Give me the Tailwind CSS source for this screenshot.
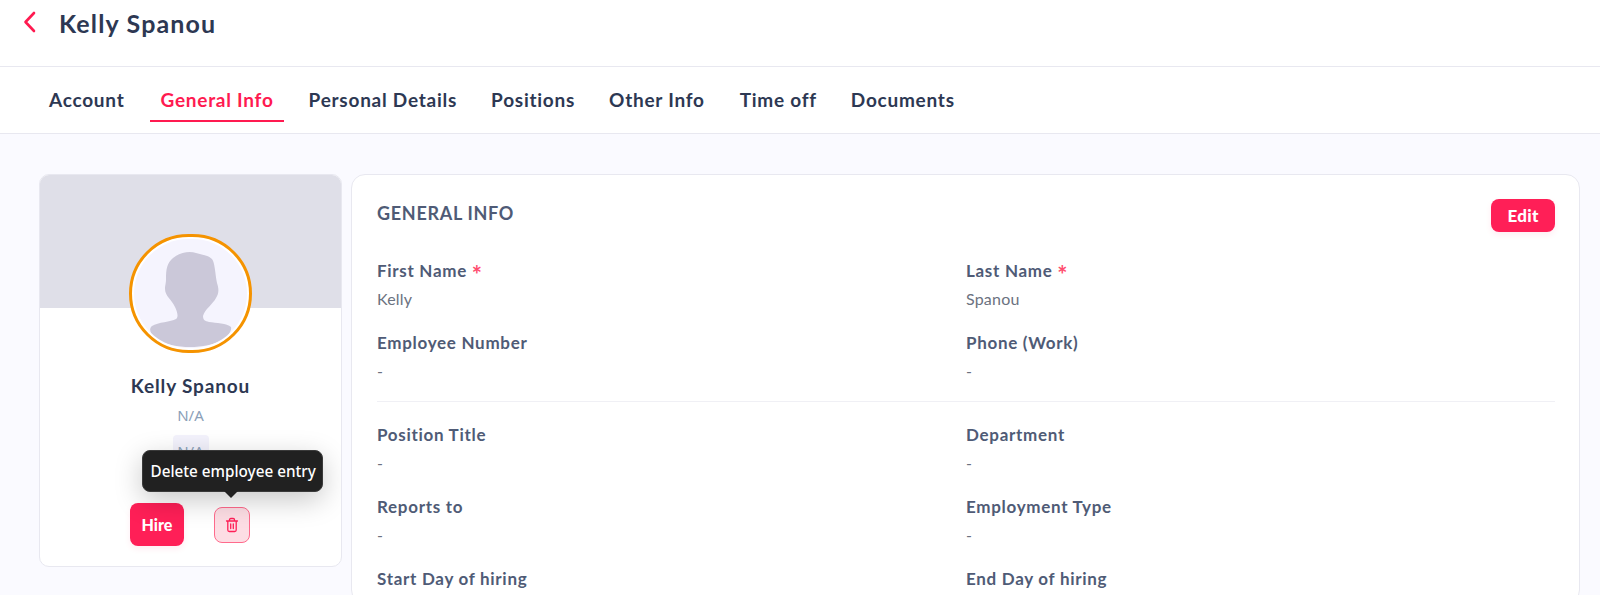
<!DOCTYPE html>
<html lang="en">
<head>
  <meta charset="UTF-8" />
  <title>Kelly Spanou - General Info</title>
  <script src="https://cdn.jsdelivr.net/npm/@tailwindcss/browser@4"></script>
</head>
<body class="h-[595px] overflow-hidden bg-[#fafaff] font-['Lato',sans-serif] text-[#2d3853]">

  <!-- Header -->
  <header class="h-[67px] bg-white border-b border-[#e8e8f0] flex items-start pl-[22px] pt-[9px] gap-[21px]">
    <svg class="w-[16px] h-[26px]" viewBox="0 0 16 26" fill="none" stroke="#ff1a50" stroke-width="2.6" stroke-linecap="round" stroke-linejoin="round"><path d="M12 4 L3.5 13 L12 22"/></svg>
    <h1 class="-mt-[1px] text-[25px] leading-[30px] font-bold tracking-[1.15px]">Kelly Spanou</h1>
  </header>

  <!-- Tabs -->
  <nav class="h-[67px] bg-white border-b border-[#e8e8f0] flex pl-[39px] pt-[16px] text-[19px] font-bold tracking-[0.75px]">
    <a class="h-[39px] px-[10px] mr-[16px] leading-[34px]">Account</a>
    <a class="h-[39px] px-[10px] mr-[15px] leading-[34px] text-[#ff1a50] border-b-2 border-[#ff1a50]">General Info</a>
    <a class="h-[39px] px-[10px] mr-[14px] leading-[34px]">Personal Details</a>
    <a class="h-[39px] px-[10px] mr-[14px] leading-[34px]">Positions</a>
    <a class="h-[39px] px-[10px] mr-[15px] leading-[34px]">Other Info</a>
    <a class="h-[39px] px-[10px] mr-[14px] leading-[34px]">Time off</a>
    <a class="h-[39px] px-[10px] leading-[34px]">Documents</a>
  </nav>

  <main class="h-[461px] overflow-hidden flex items-start gap-[9px] pl-[39px] pr-[20px] pt-[40px]">
    <!-- Profile card -->
    <section class="w-[303px] h-[393px] shrink-0 bg-white border border-[#e8e8f0] rounded-[10px] overflow-hidden flex flex-col items-center">
      <div class="w-full h-[133px] shrink-0 bg-[#dfdfe8]"></div>
      <div class="w-[123px] h-[119px] -mt-[74px] shrink-0 rounded-full border-[3px] border-[#f59300] bg-white p-[2px]">
        <div class="w-full h-full rounded-full bg-[#f5f4fe] overflow-hidden">
          <svg class="w-full h-full" viewBox="0 0 113 109" fill="#cbc8d9"><path d="M22 100 C17 96 14 90 18 87 C24 83 37 83 42 80 C45 78 43 72 41 68 C38 61 31 57 31 50 C31 46 32 45 32 40 C32 30 33 24 39 19 C46 13 56 12 62 14 C68 16 74 16 78 20 C81 24 81 34 83 44 C85 50 85 54 82 59 C79 65 71 70 69 77 C69 81 71 82 75 83 C82 84 93 84 97 88 C98 92 94 97 90 100 C80 106 68 108 56 108 C44 108 32 106 22 100 Z"/></svg>
        </div>
      </div>
      <div class="mt-[22px] text-[19px] leading-[22px] font-bold tracking-[0.85px]">Kelly Spanou</div>
      <div class="mt-[8px] text-[15px] leading-[20px] text-[#8ba0b8] font-['Noto_Sans',sans-serif]">N/A</div>
      <div class="relative mt-[10px] w-[36px] h-[30px] rounded-[4px] bg-[#f3f2fc] text-center text-[15px] leading-[32px] text-[#8ba0b8] font-['Noto_Sans',sans-serif]">
        N/A
        <!-- Tooltip -->
        <div class="absolute left-[-31px] top-[15px] w-[181px] h-[42px] pl-[8px] text-left rounded-[8px] bg-[#212121] border border-[#3a3a3a] text-white text-[15.25px] font-medium leading-[40px] whitespace-nowrap shadow-[0_8px_28px_rgba(0,0,0,0.22)]">
          Delete employee entry
          <span class="absolute left-[81px] top-[40px] w-0 h-0 border-x-[7px] border-x-transparent border-t-[7px] border-t-[#212121]"></span>
        </div>
      </div>
      <div class="mt-[38px] w-full flex items-center pl-[90px] gap-[30px]">
        <button class="w-[54px] h-[43px] rounded-[8px] bg-[#ff1f57] text-white text-[16px] font-black shadow-[0_3px_6px_rgba(255,31,87,0.08)]">Hire</button>
        <button class="w-[36px] h-[36px] rounded-[8px] bg-[#fddde4] border border-[#ff6a8c] flex items-center justify-center">
          <svg class="w-[16px] h-[16px]" viewBox="0 0 16 16" fill="none" stroke="#ff1f57" stroke-width="1.3" stroke-linecap="round" stroke-linejoin="round"><path d="M2.5 4 H13.5 M5.5 4 V2.8 C5.5 2 6 1.5 6.8 1.5 H9.2 C10 1.5 10.5 2 10.5 2.8 V4 M3.8 4 V13 C3.8 13.9 4.4 14.5 5.3 14.5 H10.7 C11.6 14.5 12.2 13.9 12.2 13 V4 M6.7 7 V11.5 M9.3 7 V11.5"/></svg>
        </button>
      </div>
    </section>

    <!-- General info card -->
    <section class="flex-1 h-[430px] bg-white border border-[#e8e8f0] rounded-[14px] pl-[25px] pr-[24px] pt-[24px]">
      <div class="flex justify-between items-start h-[61px]">
        <h2 class="mt-[3px] text-[18px] leading-[22px] font-bold tracking-[0.7px] text-[#4f5b76]">GENERAL INFO</h2>
        <button class="w-[64px] h-[33px] rounded-[8px] bg-[#ff1f57] text-white text-[17px] font-black tracking-[0.3px] shadow-[0_3px_6px_rgba(255,31,87,0.08)]">Edit</button>
      </div>

      <div class="grid grid-cols-[589px_1fr] auto-rows-[72px]">
        <div><div class="text-[17px] leading-[22px] font-bold tracking-[0.7px] text-[#4f5b76]">First Name <span class="inline-block h-[22px] align-top translate-y-[3px] text-[24px] leading-[24px] tracking-normal text-[#ff4d6f]">*</span></div><div class="mt-[6px] text-[16px] leading-[22px] tracking-[0.2px] text-[#6b7280]">Kelly</div></div>
        <div><div class="text-[17px] leading-[22px] font-bold tracking-[0.7px] text-[#4f5b76]">Last Name <span class="inline-block h-[22px] align-top translate-y-[3px] text-[24px] leading-[24px] tracking-normal text-[#ff4d6f]">*</span></div><div class="mt-[6px] text-[16px] leading-[22px] tracking-[0.2px] text-[#6b7280]">Spanou</div></div>
        <div><div class="text-[17px] leading-[22px] font-bold tracking-[0.7px] text-[#4f5b76]">Employee Number</div><div class="mt-[6px] text-[16px] leading-[22px] text-[#6b7280]">-</div></div>
        <div><div class="text-[17px] leading-[22px] font-bold tracking-[0.7px] text-[#4f5b76]">Phone (Work)</div><div class="mt-[6px] text-[16px] leading-[22px] text-[#6b7280]">-</div></div>
      </div>

      <div class="border-t border-[#f0f0f5] mt-[-3px] mb-[22px]"></div>

      <div class="grid grid-cols-[589px_1fr] auto-rows-[72px]">
        <div><div class="text-[17px] leading-[22px] font-bold tracking-[0.7px] text-[#4f5b76]">Position Title</div><div class="mt-[6px] text-[16px] leading-[22px] text-[#6b7280]">-</div></div>
        <div><div class="text-[17px] leading-[22px] font-bold tracking-[0.7px] text-[#4f5b76]">Department</div><div class="mt-[6px] text-[16px] leading-[22px] text-[#6b7280]">-</div></div>
        <div><div class="text-[17px] leading-[22px] font-bold tracking-[0.7px] text-[#4f5b76]">Reports to</div><div class="mt-[6px] text-[16px] leading-[22px] text-[#6b7280]">-</div></div>
        <div><div class="text-[17px] leading-[22px] font-bold tracking-[0.7px] text-[#4f5b76]">Employment Type</div><div class="mt-[6px] text-[16px] leading-[22px] text-[#6b7280]">-</div></div>
        <div><div class="text-[17px] leading-[22px] font-bold tracking-[0.7px] text-[#4f5b76]">Start Day of hiring</div></div>
        <div><div class="text-[17px] leading-[22px] font-bold tracking-[0.7px] text-[#4f5b76]">End Day of hiring</div></div>
      </div>
    </section>
  </main>

</body>
</html>
